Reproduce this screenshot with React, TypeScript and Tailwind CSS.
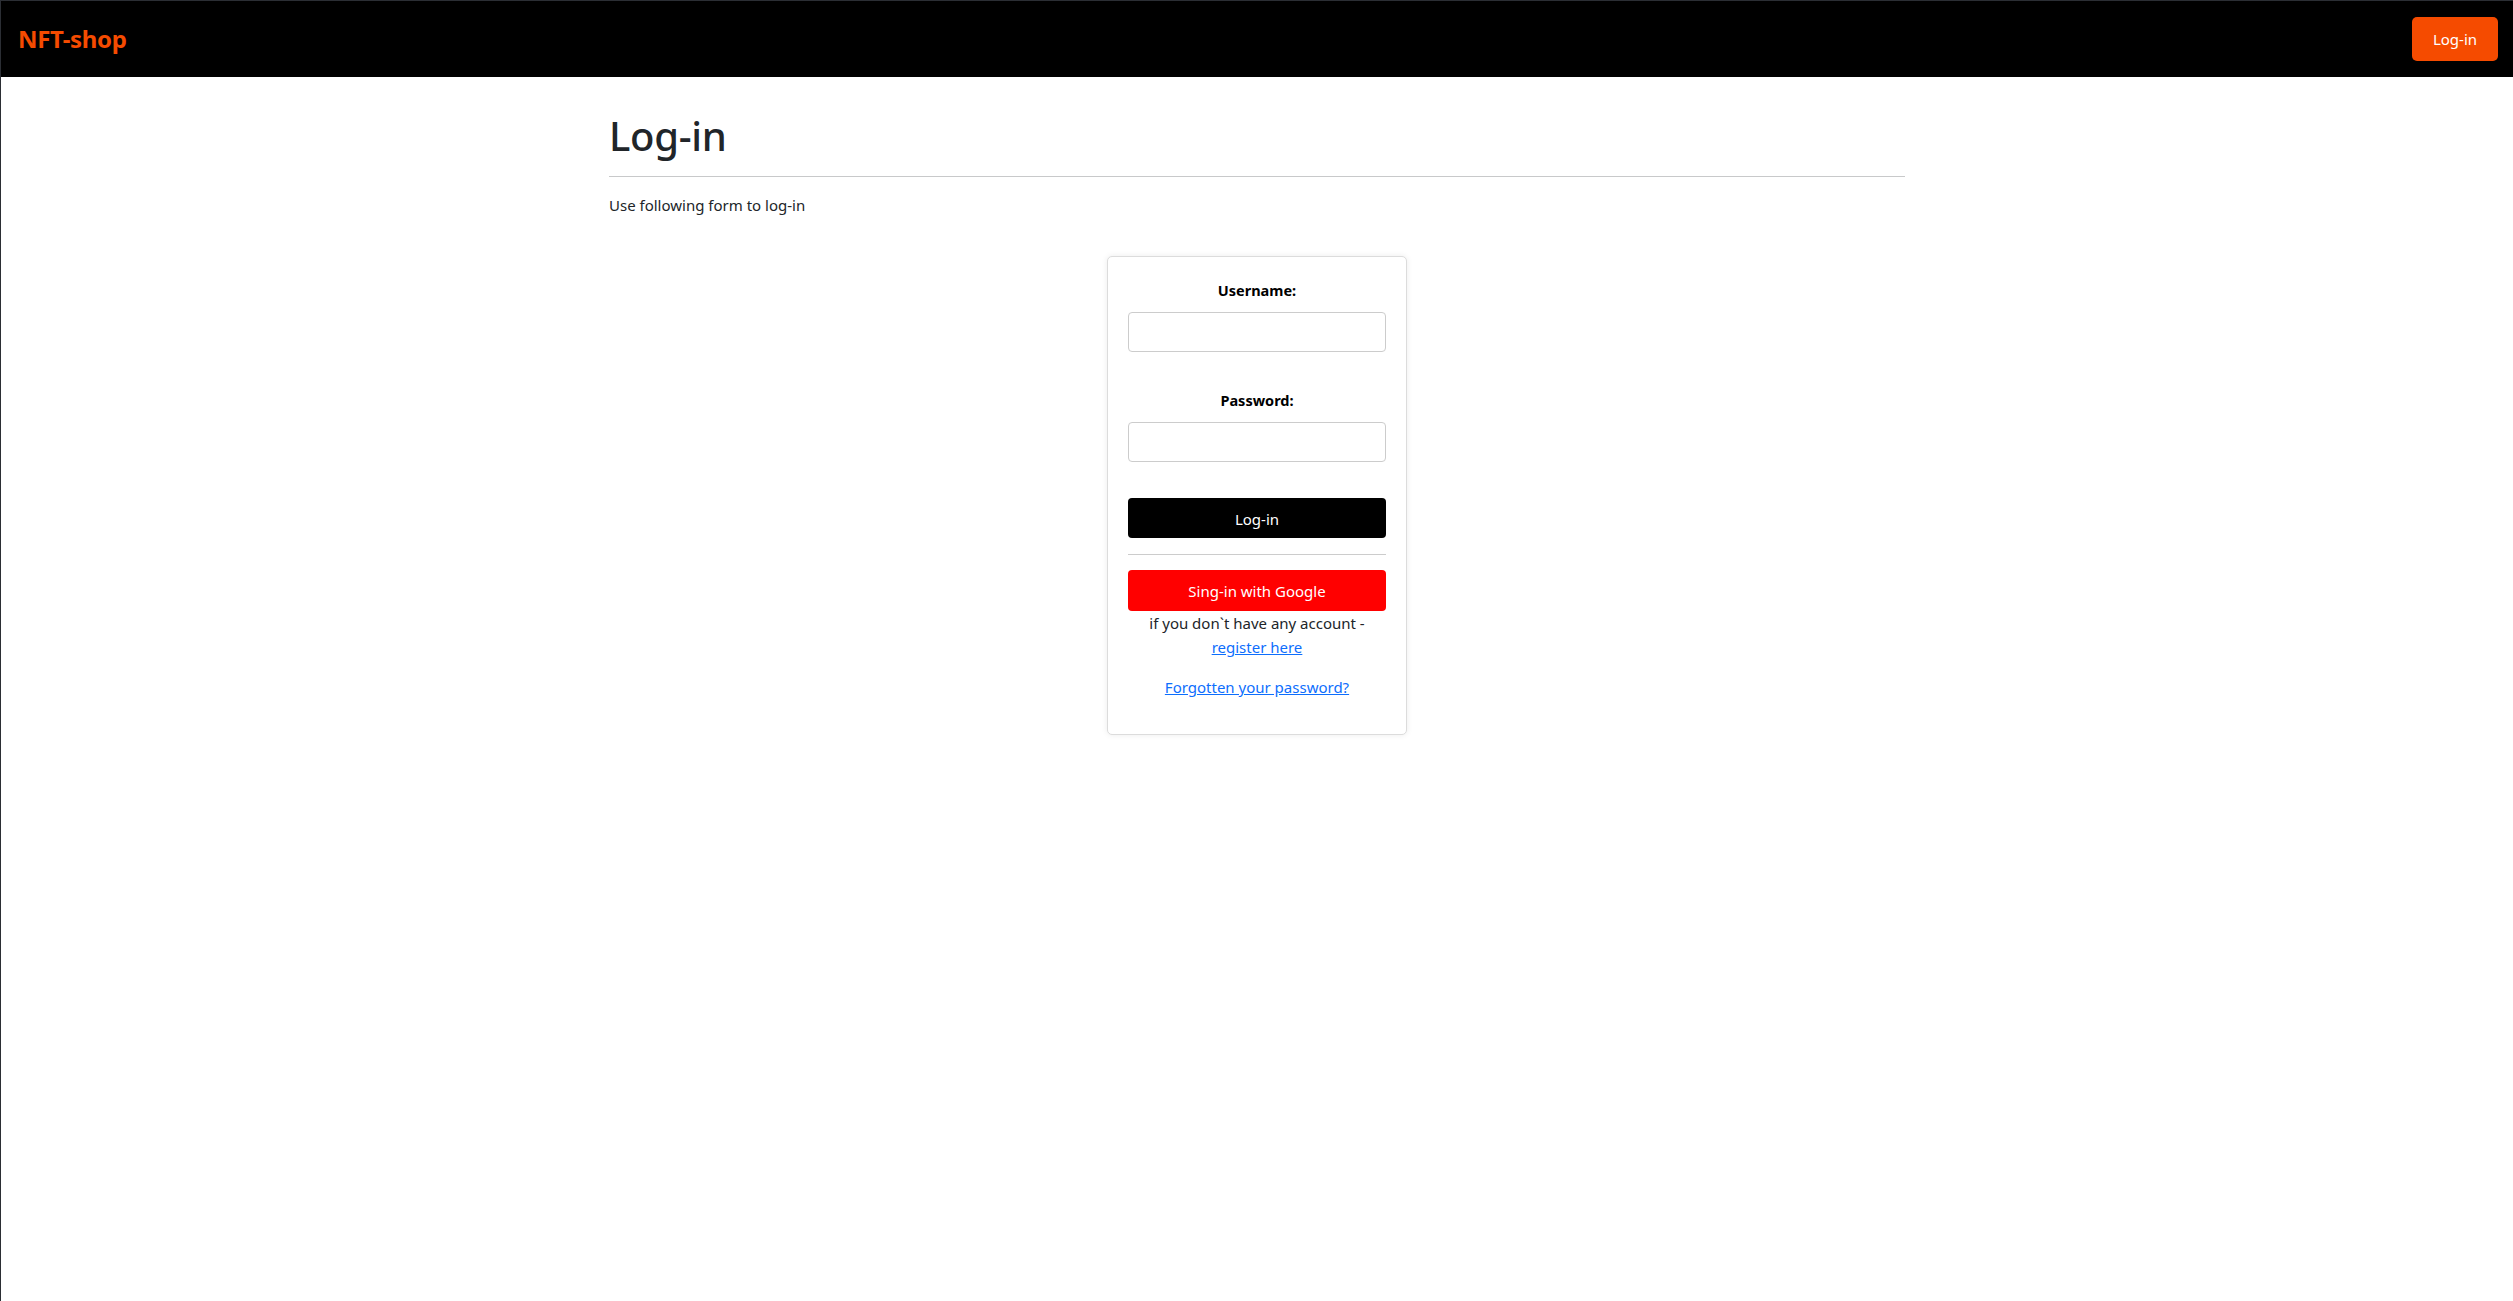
import React from "react";

const font = { fontFamily: '"Noto Sans", "Open Sans", sans-serif' };

export default function App() {
  return (
    <div
      className="min-h-screen w-full bg-white border-t border-l border-[#2b2e34] text-[#212529]"
      style={font}
    >
      <header className="h-[76px] bg-black flex items-center justify-between pl-[17px] pr-[15px]">
        <a className="text-[24px] font-bold text-[#f54b00] leading-none tracking-[-0.3px]">NFT-shop</a>
        <button className="w-[86px] h-[44px] rounded-[5px] bg-[#f54b00] text-white text-[15px] leading-none pt-[1px]">
          Log-in
        </button>
      </header>

      <main className="w-[1296px] mx-auto pt-[35px]">
        <h1 className="text-[40px] leading-[48px] font-medium tracking-[-0.3px]">Log-in</h1>
        <hr className="mt-4 border-0 border-t border-[#c8c9ca]" />
        <p className="mt-4 text-[15px] leading-[24px]">Use following form to log-in</p>

        <div className="mt-[39px] mx-auto w-[300px] rounded-[5px] border border-[#dcdcdc] bg-white shadow-[0_0_6px_rgba(0,0,0,0.08)] px-[20px] pt-[21px] pb-[20px] text-center">
          <label className="block text-[14.5px] leading-[24px] font-bold text-black">Username:</label>
          <input
            type="text"
            className="mt-[10px] block w-full h-[40px] rounded-[4px] border border-[#cccccc] bg-white px-3 outline-none"
          />
          <label className="block mt-[36px] text-[14.5px] leading-[24px] font-bold text-black">Password:</label>
          <input
            type="password"
            className="mt-[10px] block w-full h-[40px] rounded-[4px] border border-[#cccccc] bg-white px-3 outline-none"
          />
          <button className="mt-[36px] block w-full h-[40px] rounded-[4px] bg-black text-white text-[15px] leading-none pt-[3px]">
            Log-in
          </button>
          <hr className="mt-[16px] border-0 border-t border-[#cccccc]" />
          <button className="mt-[15px] block w-full h-[41px] rounded-[4px] bg-[#ff0000] text-white text-[15px] leading-none pt-[2px]">
            Sing-in with Google
          </button>
          <p className="text-[15px] leading-[24px] text-[#212529]">
            if you don`t have any account -<br />
            <a className="text-[#0d6efd] underline">register here</a>
          </p>
          <p className="mt-[16px] mb-[15px] text-[15px] leading-[24px]">
            <a className="text-[#0d6efd] underline">Forgotten your password?</a>
          </p>
        </div>
      </main>
    </div>
  );
}
